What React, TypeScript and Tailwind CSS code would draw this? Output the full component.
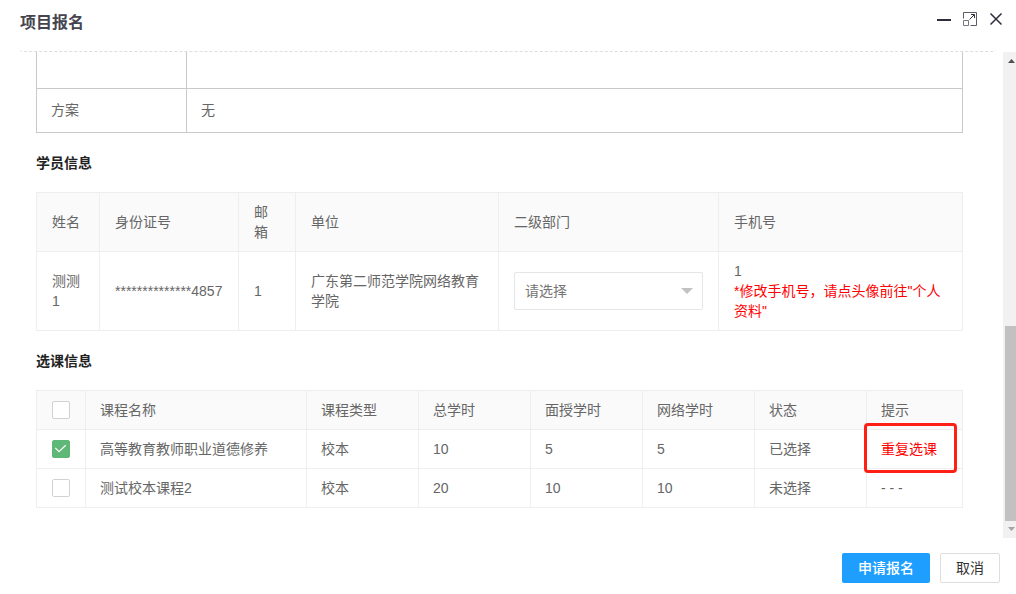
import { useState } from "react";
import type { ReactNode } from "react";

const box = "border border-[#eeeeee] py-[9px] text-left font-normal leading-5";
const cell = box + " px-[15px]";
const courseCell = box + " px-[14px]";

const courses = [
  { id: 1, name: "高等教育教师职业道德修养", type: "校本", total: 10, face: 5, online: 5, duplicate: true },
  { id: 2, name: "测试校本课程2", type: "校本", total: 20, face: 10, online: 10, duplicate: false },
];

function SectionTitle({ children }: { children: ReactNode }) {
  return <h2 className="pt-5 pb-[18px] text-sm leading-[21px] font-bold text-[#222222]">{children}</h2>;
}

function Tick({ label, checked, onChange }: { label: string; checked: boolean; onChange: (v: boolean) => void }) {
  return (
    <label className="relative mx-auto block size-[18px]">
      <input
        type="checkbox"
        aria-label={label}
        checked={checked}
        onChange={(e) => onChange(e.target.checked)}
        className="block size-[18px] appearance-none rounded-[2px] border border-[#d2d2d2] bg-white checked:border-[#5fb878] checked:bg-[#5fb878]"
      />
      {checked && (
        <svg viewBox="0 0 18 18" className="pointer-events-none absolute inset-0 size-[18px]" fill="none" stroke="#fff" strokeWidth="1.2">
          <path d="M3.3 7.8 7 11.6 13.7 5.2" />
        </svg>
      )}
    </label>
  );
}

function Header() {
  return (
    <header className="shrink-0">
      <div className="flex h-11 items-center justify-between pr-3 pl-5">
        <h1 className="pt-0.5 text-base font-bold text-[#46454f]">项目报名</h1>
        <div className="flex gap-[10px] pb-1.5 text-[#2e2d3c]">
          <button type="button" aria-label="最小化" className="size-4">
            <svg viewBox="0 0 16 16" className="size-4" fill="currentColor">
              <path d="M1 8h14v2H1z" />
            </svg>
          </button>
          <button type="button" aria-label="最大化" className="size-4">
            <svg viewBox="0 0 16 16" className="size-4" fill="none" stroke="currentColor">
              <path d="M1.5 7.5v-6h13v13h-6" stroke="#5d5c68" />
              <path d="M1.5 9.5h5v5h-5z" stroke="#77767f" />
              <path d="M7.500 8.500 12 4M9 3.500h3.500V7" />
            </svg>
          </button>
          <button type="button" aria-label="关闭" className="size-4">
            <svg viewBox="0 0 16 16" className="size-4" fill="none" stroke="currentColor" strokeWidth="1.5">
              <path d="M2.500 2.500l11 11M13.500 2.500l-11 11" />
            </svg>
          </button>
        </div>
      </div>
      <div className="mx-5 h-2 rounded-[3px] border-b border-dashed border-[#dedede]" />
    </header>
  );
}

function PlanTable() {
  const c = "border border-[#c9c9c9] px-[14px] text-left font-normal";
  return (
    <table className="w-full table-fixed border-collapse">
      <colgroup>
        <col className="w-[150px]" />
        <col />
      </colgroup>
      <tbody>
        <tr className="h-9">
          <td className={c + " border-t-0"} />
          <td className={c + " border-t-0"} />
        </tr>
        <tr className="h-11">
          <th scope="row" className={c}>方案</th>
          <td className={c}>无</td>
        </tr>
      </tbody>
    </table>
  );
}

function StudentTable() {
  return (
    <table className="w-full table-fixed border-collapse">
      <colgroup>
        <col className="w-[63px]" />
        <col className="w-[139px]" />
        <col className="w-[57px]" />
        <col className="w-[203px]" />
        <col className="w-[220px]" />
        <col />
      </colgroup>
      <thead className="bg-[#fafafa]">
        <tr>
          {["姓名", "身份证号", "邮箱", "单位", "二级部门", "手机号"].map((h) => (
            <th key={h} scope="col" className={cell}>{h}</th>
          ))}
        </tr>
      </thead>
      <tbody>
        <tr>
          <td className={cell}>测测1</td>
          <td className={cell}>**************4857</td>
          <td className={cell}>1</td>
          <td className={cell}>广东第二师范学院网络教育学院</td>
          <td className={cell}>
            <div className="relative">
              <select
                aria-label="二级部门"
                className="block h-[38px] w-full appearance-none rounded-[2px] border border-[#e6e6e6] bg-white pr-8 pl-[10px] text-[#757575]"
              >
                <option>请选择</option>
              </select>
              <svg viewBox="0 0 12 6" className="pointer-events-none absolute top-4 right-[10px] h-[6px] w-3" fill="#c2c2c2">
                <path d="M0 0h12L6 6z" />
              </svg>
            </div>
          </td>
          <td className={cell}>
            1
            <p className="text-[#ff0000]">*修改手机号，请点头像前往"个人资料"</p>
          </td>
        </tr>
      </tbody>
    </table>
  );
}

function CourseTable() {
  const [picked, setPicked] = useState<number[]>([1]);
  const toggle = (id: number, on: boolean) => setPicked((p) => (on ? [...p, id] : p.filter((x) => x !== id)));
  return (
    <table className="w-full table-fixed border-collapse">
      <colgroup>
        <col className="w-[49px]" />
        <col className="w-[221px]" />
        <col className="w-[112px]" />
        <col className="w-[112px]" />
        <col className="w-[112px]" />
        <col className="w-[112px]" />
        <col className="w-[112px]" />
        <col />
      </colgroup>
      <thead className="bg-[#fafafa]">
        <tr>
          <th scope="col" className={courseCell}>
            <Tick
              label="全选"
              checked={picked.length === courses.length}
              onChange={(on) => setPicked(on ? courses.map((c) => c.id) : [])}
            />
          </th>
          {["课程名称", "课程类型", "总学时", "面授学时", "网络学时", "状态", "提示"].map((h) => (
            <th key={h} scope="col" className={courseCell}>{h}</th>
          ))}
        </tr>
      </thead>
      <tbody>
        {courses.map((c) => {
          const on = picked.includes(c.id);
          return (
            <tr key={c.id}>
              <td className={courseCell}>
                <Tick label={c.name} checked={on} onChange={(v) => toggle(c.id, v)} />
              </td>
              <td className={courseCell}>{c.name}</td>
              <td className={courseCell}>{c.type}</td>
              <td className={courseCell}>{c.total}</td>
              <td className={courseCell}>{c.face}</td>
              <td className={courseCell}>{c.online}</td>
              <td className={courseCell}>{on ? "已选择" : "未选择"}</td>
              {c.duplicate ? (
                <td className={courseCell + " relative text-[#ff0000]"}>
                  重复选课
                  <span className="pointer-events-none absolute -top-[7px] right-[5px] -bottom-[5px] -left-[3px] rounded-[4px] border-3 border-[#ff2015]" />
                </td>
              ) : (
                <td className={courseCell}>- - -</td>
              )}
            </tr>
          );
        })}
      </tbody>
    </table>
  );
}

function ScrollTrack() {
  return (
    <div aria-hidden="true" className="flex w-[13px] shrink-0 flex-col bg-[#f1f1f1] pl-[2px]">
      <svg viewBox="0 0 11 17" className="h-[17px] w-[11px] shrink-0" fill="#505050">
        <path d="M3 11h7L6.500 7z" />
      </svg>
      <div className="flex-[257]" />
      <div className="flex-[195] bg-[#c1c1c1]" />
      <svg viewBox="0 0 11 17" className="h-[17px] w-[11px] shrink-0" fill="#a3a3a3">
        <path d="M3 6h7L6.500 10z" />
      </svg>
    </div>
  );
}

export default function App() {
  return (
    <div className="flex h-screen flex-col bg-white font-['Liberation_Sans','Noto_Sans_CJK_SC',sans-serif] text-sm text-[#666666]">
      <Header />
      <div className="flex min-h-0 flex-1">
        <main className="min-w-0 flex-1 overflow-hidden pr-10 pl-9">
          <PlanTable />
          <SectionTitle>学员信息</SectionTitle>
          <StudentTable />
          <SectionTitle>选课信息</SectionTitle>
          <CourseTable />
        </main>
        <ScrollTrack />
      </div>
      <footer className="flex shrink-0 justify-end gap-[10px] pt-[15px] pr-4 pb-[11px]">
        <button type="button" className="h-[30px] rounded-[2px] bg-[#1e9fff] px-4 font-medium text-white">申请报名</button>
        <button type="button" className="h-[30px] rounded-[2px] border border-[#dedede] bg-white px-[15px] text-[#333333]">取消</button>
      </footer>
    </div>
  );
}
